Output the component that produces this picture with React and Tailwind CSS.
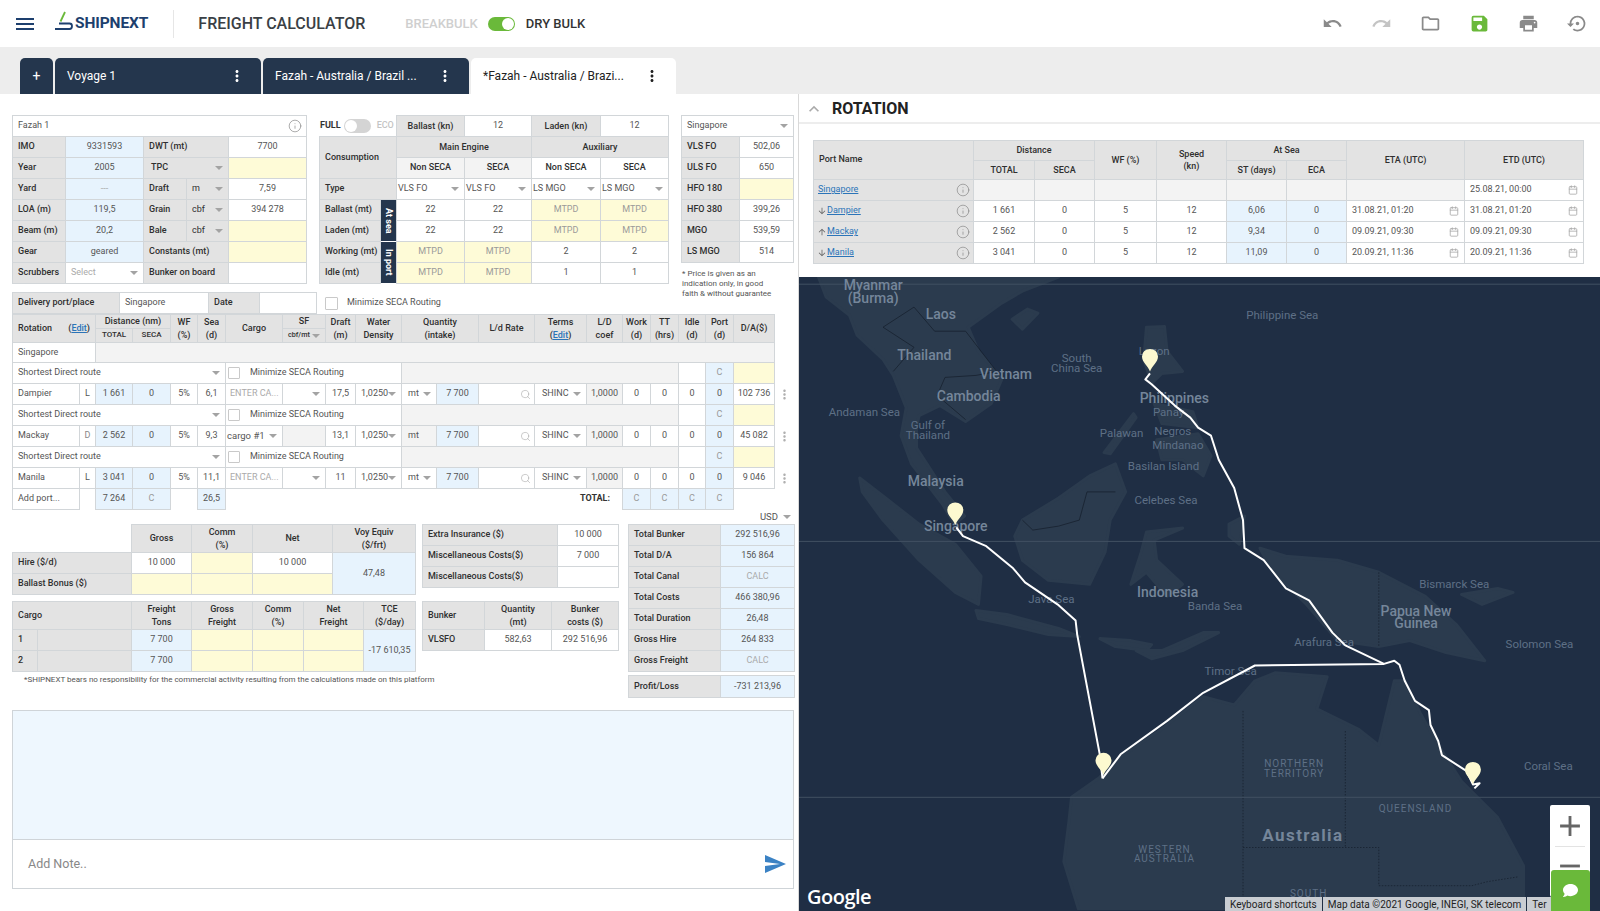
import React from 'react';
import clsx from 'clsx';
import { Calendar, Info, Search } from 'lucide-react';
import { FaComment } from 'react-icons/fa';
import {
    MdAdd, MdArrowDownward, MdArrowUpward, MdExpandLess, MdMenu, MdMoreVert, MdOutlineFolder, MdPrint, MdRedo,
    MdRemove, MdSave, MdSend, MdSettingsBackupRestore, MdUndo,
} from 'react-icons/md';

const tones = {
    label: 'bg-[#e3e3e3] text-[#2f2f2f] font-medium justify-start pl-[5px]',
    head: 'bg-[#e3e3e3] text-[#2f2f2f] font-medium justify-center text-center leading-[12.5px]',
    sub: 'bg-[#f3f3f3] text-[#2f2f2f] font-medium justify-center',
    white: 'bg-white text-[#555] justify-center',
    left: 'bg-white text-[#555] justify-start pl-[5px]',
    blue: 'bg-[#e7f3fd] text-[#555] justify-center',
    yellow: 'bg-[#fefbd7] text-[#9a9a9a] justify-center',
    gray: 'bg-[#f3f3f3] text-[#555] justify-center',
};

const Cell = ({ tone = 'white', className, children }) => (
    <div className={clsx('flex items-center ring-1 ring-[#d2d6d9] overflow-hidden whitespace-nowrap', tones[tone], className)}>
        {children}
    </div>
);

const Caret = () => <span className="ml-auto shrink-0 mr-[5px] border-x-[4px] border-t-[4px] border-x-transparent border-t-[#a3a3a3]" />;

const Select = ({ tone = 'white', className, children }) => (
    <Cell tone={tone} className={clsx('!justify-start pl-[3px]', className)}>
        <span>{children}</span>
        <Caret />
    </Cell>
);

const Check = ({ className }) => <span className={clsx('block w-[12px] h-[12px] border border-[#c9c9c9] rounded-[1px] bg-white', className)} />;

const Kebab = () => (
    <div className="flex items-center justify-center text-[#b0b0b0]">
        <MdMoreVert size={15} />
    </div>
);

const vesselRows = [
    ['IMO', '9331593', 'DWT (mt)', '7700'],
    ['Year', '2005', 'TPC', ''],
    ['Yard', '---', 'Draft', '7,59', 'm'],
    ['LOA (m)', '119,5', 'Grain', '394 278', 'cbf'],
    ['Beam (m)', '20,2', 'Bale', '', 'cbf'],
    ['Gear', 'geared', 'Constants (mt)', ''],
];

const VesselTable = () => (
    <div className="grid grid-cols-[52px_77px_42px_41px_77px] auto-rows-[20px] gap-px">
        <Cell tone="left" className="col-span-5 pr-[4px]">
            <span>Fazah 1</span>
            <Info size={14} strokeWidth={1.2} className="ml-auto text-[#888]" />
        </Cell>
        {vesselRows.map(([a, b, c, d, unit]) => (
            <React.Fragment key={a}>
                <Cell tone="label">{a}</Cell>
                <Cell tone="blue" className={b === '---' ? 'text-[#aaa]' : ''}>{b}</Cell>
                {unit ? (
                    <>
                        <Cell tone="label">{c}</Cell>
                        <Select tone="label" className="font-normal">{unit}</Select>
                    </>
                ) : c === 'TPC' ? (
                    <Select tone="label" className="col-span-2 pl-[7px]">{c}</Select>
                ) : (
                    <Cell tone="label" className="col-span-2">{c}</Cell>
                )}
                <Cell tone={d ? 'white' : 'yellow'}>{d}</Cell>
            </React.Fragment>
        ))}
        <Cell tone="label">Scrubbers</Cell>
        <Select className="!pl-[5px] text-[#aaa]">Select</Select>
        <Cell tone="label" className="col-span-2">Bunker on board</Cell>
        <Cell />
    </div>
);

const ConsumptionTable = () => (
    <div className="grid grid-cols-[60px_15px_67px_66px_68px_67px] auto-rows-[20px] gap-px">
        <div className="col-span-2 flex items-center">
            <span className="font-bold text-[#333]">FULL</span>
            <span className="ml-[3px] w-[27px] h-[14px] rounded-full bg-[#d4d4d4] flex items-center">
                <span className="ml-px w-[12px] h-[12px] rounded-full bg-white" />
            </span>
            <span className="ml-[6px] font-medium text-[#c4c4c4]">ECO</span>
        </div>
        <Cell tone="head">Ballast (kn)</Cell>
        <Cell>12</Cell>
        <Cell tone="head">Laden (kn)</Cell>
        <Cell>12</Cell>

        <Cell tone="label" className="col-span-2 row-span-2">Consumption</Cell>
        <Cell tone="head" className="col-span-2">Main Engine</Cell>
        <Cell tone="head" className="col-span-2">Auxiliary</Cell>
        <Cell tone="sub">Non SECA</Cell>
        <Cell tone="sub">SECA</Cell>
        <Cell tone="sub" className="bg-white">Non SECA</Cell>
        <Cell tone="sub" className="bg-white">SECA</Cell>

        <Cell tone="label" className="col-span-2">Type</Cell>
        <Select className="!pl-[1px]">VLS FO</Select>
        <Select className="!pl-[1px]">VLS FO</Select>
        <Select className="!pl-[1px]">LS MGO</Select>
        <Select className="!pl-[1px]">LS MGO</Select>

        <Cell tone="label">Ballast (mt)</Cell>
        <div className="row-span-2 flex items-center justify-center bg-[#24364d] text-white font-bold [writing-mode:vertical-rl]">At sea</div>
        <Cell>22</Cell>
        <Cell>22</Cell>
        <Cell tone="yellow">MTPD</Cell>
        <Cell tone="yellow">MTPD</Cell>

        <Cell tone="label">Laden (mt)</Cell>
        <Cell>22</Cell>
        <Cell>22</Cell>
        <Cell tone="yellow">MTPD</Cell>
        <Cell tone="yellow">MTPD</Cell>

        <Cell tone="label">Working (mt)</Cell>
        <div className="row-span-2 flex items-center justify-center bg-[#24364d] text-white font-bold [writing-mode:vertical-rl]">In port</div>
        <Cell tone="yellow">MTPD</Cell>
        <Cell tone="yellow">MTPD</Cell>
        <Cell>2</Cell>
        <Cell>2</Cell>

        <Cell tone="label">Idle (mt)</Cell>
        <Cell tone="yellow">MTPD</Cell>
        <Cell tone="yellow">MTPD</Cell>
        <Cell>1</Cell>
        <Cell>1</Cell>
    </div>
);

const PriceTable = () => (
    <div>
        <div className="grid grid-cols-[57px_53px] auto-rows-[20px] gap-px">
            <Select className="col-span-2 !pl-[5px]">Singapore</Select>
            {[['VLS FO', '502,06'], ['ULS FO', '650'], ['HFO 180', ''], ['HFO 380', '399,26'], ['MGO', '539,59'], ['LS MGO', '514']].map(([a, b]) => (
                <React.Fragment key={a}>
                    <Cell tone="label">{a}</Cell>
                    <Cell tone={b ? 'white' : 'yellow'}>{b}</Cell>
                </React.Fragment>
            ))}
        </div>
        <p className="mt-[7px] text-[8px] leading-[10px] text-[#555]">* Price is given as an<br />indication only, in good<br />faith &amp; without guarantee</p>
    </div>
);

const routeRow = (
    <>
        <Select tone="left" className="col-span-6 !pl-[5px]">Shortest Direct route</Select>
        <Cell tone="left" className="col-span-4 !pl-[2px]">
            <Check className="mr-[10px]" />
            <span>Minimize SECA Routing</span>
        </Cell>
        <Cell tone="gray" className="col-span-7" />
        <Cell />
        <Cell tone="blue" className="text-[#999]">C</Cell>
        <Cell tone="yellow" />
        <div />
    </>
);

const PortRow = ({ name, type, total, sea, cargo, draft, unitSelect, da }) => (
    <>
        <Cell tone="left">{name}</Cell>
        <Cell className={type === 'D' ? 'text-[#888]' : ''}>{type}</Cell>
        <Cell tone="blue">{total}</Cell>
        <Cell tone="blue">0</Cell>
        <Cell>5%</Cell>
        <Cell>{sea}</Cell>
        {cargo ? (
            <>
                <Select className="!pl-px text-[9.5px]">{cargo}</Select>
                <Cell tone="gray" />
            </>
        ) : (
            <>
                <Cell tone="left" className="text-[#aaa] !pl-[4px]">ENTER CA...</Cell>
                <Select />
            </>
        )}
        <Cell>{draft}</Cell>
        <Select className="!pl-[5px]">1,0250</Select>
        {unitSelect ? <Select className="!pl-[6px]">mt</Select> : <Cell tone="gray" className="!justify-start pl-[6px]">mt</Cell>}
        <Cell tone="blue">7 700</Cell>
        <Cell className="!justify-end pr-[3px]"><Search size={11} strokeWidth={1.3} className="text-[#aaa]" /></Cell>
        <Select className="!pl-[7px]">SHINC</Select>
        <Cell tone="gray">1,0000</Cell>
        <Cell>0</Cell>
        <Cell>0</Cell>
        <Cell>0</Cell>
        <Cell tone="blue">0</Cell>
        <Cell>{da}</Cell>
        <Kebab />
    </>
);

const RotationTable = () => (
    <div className="grid grid-cols-[66px_15px_36px_37px_26px_27px_56px_42px_29px_45px_34px_41px_55px_51px_35px_27px_27px_26px_27px_40px_19px] grid-rows-[13px_13px_19px_repeat(7,20px)] gap-px">
        <Cell tone="label" className="col-span-2 row-span-2 !pr-[2px] justify-between">
            <span>Rotation</span>
            <span className="ml-auto mr-[3px] font-medium">(<span className="text-[#2b74b8] underline">Edit</span>)</span>
        </Cell>
        <Cell tone="head" className="col-span-2">Distance (nm)</Cell>
        <Cell tone="head" className="row-span-2">WF<br />(%)</Cell>
        <Cell tone="head" className="row-span-2">Sea<br />(d)</Cell>
        <Cell tone="head" className="row-span-2">Cargo</Cell>
        <Cell tone="head">SF</Cell>
        <Cell tone="head" className="row-span-2">Draft<br />(m)</Cell>
        <Cell tone="head" className="row-span-2">Water<br />Density</Cell>
        <Cell tone="head" className="col-span-2 row-span-2">Quantity<br />(intake)</Cell>
        <Cell tone="head" className="row-span-2">L/d Rate</Cell>
        <Cell tone="head" className="row-span-2"><span>Terms<br />(<span className="text-[#2b74b8] underline">Edit</span>)</span></Cell>
        <Cell tone="head" className="row-span-2">L/D<br />coef</Cell>
        <Cell tone="head" className="row-span-2">Work<br />(d)</Cell>
        <Cell tone="head" className="row-span-2">TT<br />(hrs)</Cell>
        <Cell tone="head" className="row-span-2">Idle<br />(d)</Cell>
        <Cell tone="head" className="row-span-2">Port<br />(d)</Cell>
        <Cell tone="head" className="row-span-2">D/A($)</Cell>
        <div className="row-span-2" />
        <Cell tone="head" className="text-[8px]">TOTAL</Cell>
        <Cell tone="head" className="text-[8px]">SECA</Cell>
        <Cell tone="head" className="!justify-start pl-[5px] text-[7.2px]">cbf/mt<Caret /></Cell>

        <Cell tone="left" className="col-span-2">Singapore</Cell>
        <Cell tone="gray" className="col-span-18" />
        <div />

        {routeRow}
        <PortRow name="Dampier" type="L" total="1 661" sea="6,1" draft="17,5" unitSelect da="102 736" />
        {routeRow}
        <PortRow name="Mackay" type="D" total="2 562" sea="9,3" cargo="cargo #1" draft="13,1" da="45 082" />
        {routeRow}
        <PortRow name="Manila" type="L" total="3 041" sea="11,1" draft="11" unitSelect da="9 046" />

        <Cell tone="left">Add port...</Cell>
        <div />
        <Cell tone="blue">7 264</Cell>
        <Cell tone="blue" className="text-[#999]">C</Cell>
        <div />
        <Cell tone="blue">26,5</Cell>
        <div className="col-span-9 flex items-center justify-end pr-[12px] font-bold text-[#333]">TOTAL:</div>
        <Cell tone="blue" className="text-[#999]">C</Cell>
        <Cell tone="blue" className="text-[#999]">C</Cell>
        <Cell tone="blue" className="text-[#999]">C</Cell>
        <Cell tone="blue" className="text-[#999]">C</Cell>
    </div>
);

const HireTable = () => (
    <div className="grid grid-cols-[118px_59px_60px_79px_82px] grid-rows-[27px_20px_20px] gap-px">
        <div />
        <Cell tone="head">Gross</Cell>
        <Cell tone="head">Comm<br />(%)</Cell>
        <Cell tone="head">Net</Cell>
        <Cell tone="head">Voy Equiv<br />($/frt)</Cell>
        <Cell tone="label">Hire ($/d)</Cell>
        <Cell>10 000</Cell>
        <Cell tone="yellow" />
        <Cell>10 000</Cell>
        <Cell tone="blue" className="row-span-2">47,48</Cell>
        <Cell tone="label">Ballast Bonus ($)</Cell>
        <Cell tone="yellow" />
        <Cell tone="yellow" />
        <Cell tone="yellow" />
    </div>
);

const CargoTable = () => (
    <div className="mt-[8px] grid grid-cols-[24px_93px_59px_60px_50px_59px_51px] grid-rows-[27px_20px_20px] gap-px">
        <Cell tone="label" className="col-span-2">Cargo</Cell>
        <Cell tone="head">Freight<br />Tons</Cell>
        <Cell tone="head">Gross<br />Freight</Cell>
        <Cell tone="head">Comm<br />(%)</Cell>
        <Cell tone="head">Net<br />Freight</Cell>
        <Cell tone="head">TCE<br />($/day)</Cell>
        <Cell tone="label">1</Cell>
        <Cell tone="label" />
        <Cell tone="blue">7 700</Cell>
        <Cell tone="yellow" />
        <Cell tone="yellow" />
        <Cell tone="yellow" />
        <Cell tone="blue" className="row-span-2">-17 610,35</Cell>
        <Cell tone="label">2</Cell>
        <Cell tone="label" />
        <Cell tone="blue">7 700</Cell>
        <Cell tone="yellow" />
        <Cell tone="yellow" />
        <Cell tone="yellow" />
    </div>
);

const CostsTable = () => (
    <div className="grid grid-cols-[134px_60px] auto-rows-[20px] gap-px">
        <Cell tone="label">Extra Insurance ($)</Cell>
        <Cell>10 000</Cell>
        <Cell tone="label">Miscellaneous Costs($)</Cell>
        <Cell>7 000</Cell>
        <Cell tone="label">Miscellaneous Costs($)</Cell>
        <Cell />
    </div>
);

const BunkerTable = () => (
    <div className="mt-[15px] grid grid-cols-[61px_66px_66px] grid-rows-[27px_20px] gap-px">
        <Cell tone="label">Bunker</Cell>
        <Cell tone="head">Quantity<br />(mt)</Cell>
        <Cell tone="head">Bunker<br />costs ($)</Cell>
        <Cell tone="label" className="font-bold">VLSFO</Cell>
        <Cell>582,63</Cell>
        <Cell>292 516,96</Cell>
    </div>
);

const totals = [
    ['Total Bunker', '292 516,96'],
    ['Total D/A', '156 864'],
    ['Total Canal', 'CALC'],
    ['Total Costs', '466 380,96'],
    ['Total Duration', '26,48'],
    ['Gross Hire', '264 833'],
    ['Gross Freight', 'CALC'],
];

const TotalsTable = () => (
    <div>
        <div className="grid grid-cols-[91px_73px] auto-rows-[20px] gap-px">
            {totals.map(([a, b]) => (
                <React.Fragment key={a}>
                    <Cell tone="label">{a}</Cell>
                    <Cell tone="blue" className={b === 'CALC' ? 'text-[#aaa]' : ''}>{b}</Cell>
                </React.Fragment>
            ))}
        </div>
        <div className="mt-[5px] grid grid-cols-[91px_73px] auto-rows-[21px] gap-px">
            <Cell tone="label">Profit/Loss</Cell>
            <Cell tone="blue">-731 213,96</Cell>
        </div>
    </div>
);

const Calculator = () => (
    <div className="w-[799px] shrink-0 border-r border-[#d9d9d9] pt-[22px] flex flex-col text-[9px] text-[#555]">
        <div className="pl-[13px] flex items-start gap-[14px]">
            <VesselTable />
            <ConsumptionTable />
            <PriceTable />
        </div>

        <div className="pl-[13px] -mt-[6px] flex items-center">
            <div className="grid grid-cols-[106px_88px_50px_56px] auto-rows-[20px] gap-px">
                <Cell tone="label">Delivery port/place</Cell>
                <Cell tone="left">Singapore</Cell>
                <Cell tone="label">Date</Cell>
                <Cell />
            </div>
            <Check className="ml-[9px] w-[13px] h-[13px]" />
            <span className="ml-[9px]">Minimize SECA Routing</span>
        </div>

        <div className="pl-[13px] mt-[2px]">
            <RotationTable />
        </div>

        <div className="h-[16px] pr-[7px] flex items-center justify-end gap-[5px] text-[9.5px]">
            USD <span className="border-x-[4px] border-t-[4px] border-x-transparent border-t-[#a3a3a3]" />
        </div>

        <div className="pl-[13px] flex items-start">
            <div className="w-[410px] shrink-0">
                <HireTable />
                <CargoTable />
                <p className="mt-[3px] pl-[11px] text-[8px] leading-[12px] whitespace-nowrap">*SHIPNEXT bears no responsibility for the commercial activity resulting from the calculations made on this platform</p>
            </div>
            <div className="w-[206px] shrink-0">
                <CostsTable />
                <BunkerTable />
            </div>
            <TotalsTable />
        </div>

        <div className="mt-[13px] ml-[12px] mr-[4px] border border-[#cfd4d8]">
            <div className="h-[129px] bg-[#eef7fe] border-b border-[#cfd4d8]" />
            <div className="h-[48px] bg-white flex items-center pl-[15px] pr-[6px] text-[12.5px] text-[#888]">
                <span>Add Note..</span>
                <MdSend size={24} className="ml-auto text-[#3b82c4]" />
            </div>
        </div>
    </div>
);

const portRows = [
    { name: 'Dampier', dir: 'down', total: '1 661', st: '6,06', eta: '31.08.21, 01:20', etd: '31.08.21, 01:20' },
    { name: 'Mackay', dir: 'up', total: '2 562', st: '9,34', eta: '09.09.21, 09:30', etd: '09.09.21, 09:30' },
    { name: 'Manila', dir: 'down', total: '3 041', st: '11,09', eta: '20.09.21, 11:36', etd: '20.09.21, 11:36' },
];

const DateCell = ({ value }) => (
    <Cell tone="left" className="pr-[5px]">
        <span>{value}</span>
        <Calendar size={10} className="ml-auto text-[#aaa]" />
    </Cell>
);

const PortNameCell = ({ name, dir }) => (
    <Cell tone="label" className="font-normal pr-[3px] !pl-[3px]">
        {dir === 'down' && <MdArrowDownward size={10} className="text-[#666]" />}
        {dir === 'up' && <MdArrowUpward size={10} className="text-[#666]" />}
        <span className={clsx('text-[#2b74b8] underline', !dir && 'ml-px')}>{name}</span>
        <Info size={14} strokeWidth={1} className="ml-auto text-[#777]" />
    </Cell>
);

const RouteTable = () => (
    <div className="ml-[15px] mt-[17px] grid grid-cols-[159px_60px_59px_61px_69px_59px_59px_117px_118px] grid-rows-[19px_18px_repeat(4,20px)] gap-px text-[9px] text-[#555]">
        <Cell tone="label" className="row-span-2">Port Name</Cell>
        <Cell tone="head" className="col-span-2">Distance</Cell>
        <Cell tone="head" className="row-span-2">WF (%)</Cell>
        <Cell tone="head" className="row-span-2">Speed<br />(kn)</Cell>
        <Cell tone="head" className="col-span-2">At Sea</Cell>
        <Cell tone="head" className="row-span-2">ETA (UTC)</Cell>
        <Cell tone="head" className="row-span-2">ETD (UTC)</Cell>
        <Cell tone="head">TOTAL</Cell>
        <Cell tone="head">SECA</Cell>
        <Cell tone="head">ST (days)</Cell>
        <Cell tone="head">ECA</Cell>

        <PortNameCell name="Singapore" />
        <Cell tone="gray" />
        <Cell tone="gray" />
        <Cell tone="gray" />
        <Cell tone="gray" />
        <Cell tone="gray" />
        <Cell tone="gray" />
        <Cell tone="gray" />
        <DateCell value="25.08.21, 00:00" />

        {portRows.map((row) => (
            <React.Fragment key={row.name}>
                <PortNameCell name={row.name} dir={row.dir} />
                <Cell>{row.total}</Cell>
                <Cell>0</Cell>
                <Cell>5</Cell>
                <Cell>12</Cell>
                <Cell tone="blue">{row.st}</Cell>
                <Cell tone="blue">0</Cell>
                <DateCell value={row.eta} />
                <DateCell value={row.etd} />
            </React.Fragment>
        ))}
    </div>
);

// coordinates below were read off a stretched crop of the map, so scale them here
const mx = (x) => +(x / 1.936 - 9).toFixed(1);
const my = (y) => +(y / 2.489 + 2).toFixed(1);
const toPoints = (pts) => pts.map(([x, y]) => `${mx(x)},${my(y)}`).join(' ');

const land = [
    [[55, -5], [70, 45], [115, 90], [130, 140], [180, 200], [200, 240], [225, 320], [215, 390], [235, 460], [265, 510], [295, 560], [318, 610], [338, 590], [300, 530], [270, 470], [245, 420], [245, 370], [250, 340], [290, 315], [340, 355], [390, 310], [410, 250], [365, 180], [345, 120], [410, 60], [450, 30], [520, -5]],
    [[135, 495], [180, 540], [250, 610], [320, 660], [370, 740], [365, 810], [320, 780], [250, 700], [180, 600], [140, 530]],
    [[360, 825], [420, 835], [520, 870], [560, 890], [500, 885], [420, 860], [365, 845]],
    [[600, 895], [660, 900], [700, 910], [690, 925], [630, 915]],
    [[670, 925], [720, 925], [800, 880], [830, 880], [760, 925], [700, 945]],
    [[435, 640], [450, 600], [520, 545], [580, 490], [630, 460], [650, 530], [620, 600], [610, 680], [580, 760], [500, 750], [450, 700]],
    [[660, 760], [680, 680], [690, 630], [760, 620], [705, 650], [710, 700], [760, 760], [730, 790], [690, 730]],
    [[690, 120], [725, 118], [730, 180], [760, 230], [720, 235], [700, 260], [685, 200]],
    [[705, 310], [780, 330], [790, 370], [720, 360]],
    [[710, 400], [790, 385], [815, 440], [800, 490], [760, 450], [720, 450]],
    [[608, 432], [665, 335], [670, 345], [620, 435]],
    [[850, 610], [880, 590], [870, 660], [850, 640]],
    [[910, 670], [960, 690], [1060, 700], [1140, 730], [1230, 790], [1290, 860], [1345, 950], [1270, 930], [1200, 900], [1140, 915], [1060, 900], [1000, 810], [930, 720]],
    [[1300, 785], [1370, 770], [1400, 780], [1340, 810]],
    [[430, 100], [460, 75], [480, 85], [450, 125]],
    [[545, 1290], [600, 1240], [640, 1190], [720, 1120], [800, 1040], [860, 1060], [900, 1000], [940, 980], [1040, 990], [1020, 1070], [1100, 1120], [1140, 1160], [1170, 1000], [1190, 1000], [1220, 1080], [1250, 1150], [1300, 1250], [1370, 1340], [1420, 1460], [1420, 1575], [560, 1575], [530, 1450], [540, 1350]],
];

const borders = [
    [[180, 120], [240, 70], [280, 130], [340, 130], [400, 230], [360, 240], [300, 245], [285, 290], [340, 350]],
    [[200, 230], [240, 170], [180, 120]],
    [[450, 600], [470, 625], [520, 615], [560, 600], [575, 530], [630, 530]],
];

const dashed = [
    [[877, 1075], [877, 1575]],
    [[1075, 1125], [1075, 1415]],
    [[877, 1415], [1140, 1415], [1140, 1510], [1320, 1510], [1350, 1500], [1410, 1488]],
    [[1140, 730], [1140, 915]],
];

const routes = [
    [[322, 618], [335, 640], [380, 665], [432, 720], [455, 755], [520, 812], [553, 850], [556, 885], [600, 1185], [605, 1243]],
    [[605, 1243], [640, 1183], [730, 1100], [800, 1030], [900, 962], [1150, 958], [1170, 950], [1180, 960], [1190, 1000], [1210, 1050], [1237, 1073], [1240, 1110], [1255, 1150], [1262, 1185], [1310, 1225], [1322, 1258], [1335, 1255], [1325, 1268]],
    [[1150, 958], [1075, 912], [1050, 880], [1005, 800], [960, 770], [917, 700], [880, 670], [877, 600], [860, 520], [830, 450], [815, 390], [790, 370], [775, 345], [745, 315], [700, 262], [688, 250], [697, 235]],
];

const pins = [[320, 612], [697, 230], [607, 1235], [1322, 1258]];

const countries = [
    ['Myanmar', 161, 15], ['(Burma)', 161, 48], ['Laos', 292, 87], ['Thailand', 260, 188], ['Vietnam', 418, 237],
    ['Cambodia', 346, 290], ['Malaysia', 282, 502], ['Singapore', 321, 615], ['Philippines', 744, 296],
    ['Indonesia', 731, 778], ['Papua New', 1212, 825], ['Guinea', 1212, 857],
];

const seas = [
    ['Philippine Sea', 953, 90], ['South', 555, 196], ['China Sea', 555, 221], ['Andaman Sea', 144, 332], ['Gulf of', 267, 363],
    ['Thailand', 267, 388], ['Palawan', 642, 384], ['Panay', 733, 330], ['Negros', 741, 377], ['Mindanao', 751, 412],
    ['Luzon', 705, 178], ['Basilan Island', 723, 466], ['Celebes Sea', 728, 551], ['Java Sea', 506, 797], ['Banda Sea', 823, 815],
    ['Arafura Sea', 1034, 903], ['Timor Sea', 853, 976], ['Bismarck Sea', 1286, 759], ['Solomon Sea', 1451, 909], ['Coral Sea', 1468, 1213],
];

const states = [
    ['NORTHERN', 976, 1205], ['TERRITORY', 976, 1230], ['QUEENSLAND', 1211, 1318], ['WESTERN', 725, 1419], ['AUSTRALIA', 725, 1443], ['SOUTH', 1004, 1530],
];

const MapDrawing = () => (
    <svg width="801" height="633" className="block" fontFamily="Roboto, sans-serif" textAnchor="middle">
        {land.map((pts, i) => <polygon key={i} points={toPoints(pts)} fill="#2b3b4e" stroke="#2b3b4e" strokeWidth="3" strokeLinejoin="round" />)}
        {borders.map((pts, i) => <polyline key={i} points={toPoints(pts)} fill="none" stroke="#17212f" strokeWidth="0.8" />)}
        {dashed.map((pts, i) => <polyline key={i} points={toPoints(pts)} fill="none" stroke="#17212f" strokeWidth="0.8" strokeDasharray="1.5 1.5" />)}
        <line x1="0" y1={my(13)} x2="801" y2={my(13)} stroke="#415062" />
        <line x1="0" y1={my(653)} x2="801" y2={my(653)} stroke="#415062" />
        <line x1="0" y1={my(1290)} x2="801" y2={my(1290)} stroke="#415062" />
        {seas.map(([t, x, y]) => <text key={t + y} x={mx(x)} y={my(y) + 4} fontSize="11.5" fill="#5e7086">{t}</text>)}
        {states.map(([t, x, y]) => <text key={t} x={mx(x)} y={my(y) + 3.5} fontSize="10" letterSpacing="1" fill="#5e7086">{t}</text>)}
        {countries.map(([t, x, y]) => <text key={t} x={mx(x)} y={my(y) + 5} fontSize="14" fontWeight="500" fill="#75869a">{t}</text>)}
        <text x={mx(993)} y={my(1385) + 6} fontSize="17" fontWeight="700" letterSpacing="1.4" fill="#75869a">Australia</text>
        {routes.map((pts, i) => <polyline key={i} points={toPoints(pts)} fill="none" stroke="#fff" strokeWidth="2" strokeLinejoin="round" />)}
        {pins.map(([x, y]) => (
            <path key={x} transform={`translate(${mx(x)} ${my(y)})`} fill="#fdf9d0" d="M0 0C-2-6-8-9-8-15A8 7.500 0 1 1 8-15C8-9 2-6 0 0Z" />
        ))}
    </svg>
);

const MapPanel = () => (
    <div className="relative flex-1 min-h-0 mt-[14px] bg-[#1f2e44] overflow-hidden">
        <MapDrawing />
        <span className="absolute left-[8px] -bottom-px font-[family-name:Open_Sans,sans-serif] text-[20px] font-semibold tracking-[-0.5px] text-white">Google</span>
        <div className="absolute right-[10px] bottom-[14px] w-[40px] h-[92px] bg-white rounded-[2px] flex flex-col items-center text-[#666] pt-[4px]">
            <MdAdd size={34} />
            <span className="block w-[30px] h-px bg-[#e3e3e3] mt-[3px]" />
            <MdRemove size={34} className="mt-[2px]" />
        </div>
        <div className="absolute right-[39px] left-[426px] bottom-0 h-[14px] flex items-stretch gap-px bg-[#1f2e44] text-[10px] text-[#222] whitespace-nowrap">
            <span className="pl-[5px] pr-[5px] bg-[#c9cdd2]">Keyboard shortcuts</span>
            <span className="pl-[5px] pr-[5px] bg-[#c9cdd2]">Map data ©2021 Google, INEGI, SK telecom</span>
            <span className="pl-[5px] flex-1 overflow-hidden bg-[#c9cdd2]">Ter</span>
        </div>
        <div className="absolute right-[10px] bottom-0 w-[39px] h-[41px] rounded-t-[3px] bg-[#6ab93a] flex items-center justify-center text-white">
            <FaComment size={15} />
        </div>
    </div>
);

const Tab = ({ children, active, className }) => (
    <div className={clsx('h-full flex items-center rounded-t-[5px] text-[12px] pl-[12px] pr-[15px]', active ? 'bg-white text-[#222]' : 'bg-[#24364d] text-white', className)}>
        <span className="whitespace-nowrap">{children}</span>
        <MdMoreVert size={18} className="ml-auto" />
    </div>
);

const App = () => (
    <div className="w-[1600px] h-[911px] overflow-hidden bg-white flex flex-col font-[family-name:Roboto,sans-serif]">
        <header className="h-[47px] shrink-0 flex items-center">
            <MdMenu size={24} className="ml-[13px] text-[#1d3f6e]" />
            <svg width="22" height="22" viewBox="0 0 22 22" className="ml-[17px] -mt-[3px]">
                <path d="M11 1 L6.500 10.500" stroke="#6ab93a" strokeWidth="1.800" fill="none" />
                <path d="M5 12.500 H15.500 Q18 12.500 18 15 Q18 18 15.500 18 H1" stroke="#1d3f6e" strokeWidth="1.800" fill="none" />
            </svg>
            <span className="-ml-[1px] text-[15.5px] font-bold text-[#1d3f6e] tracking-[-0.1px]">SHIPNEXT</span>
            <span className="ml-[25px] w-px h-[28px] bg-[#e6e6e6]" />
            <span className="ml-[24px] text-[16px] font-medium text-[#3a3f45]">FREIGHT CALCULATOR</span>
            <span className="ml-[40px] text-[13px] font-medium text-[#cfcfcf]">BREAKBULK</span>
            <span className="ml-[10px] w-[27px] h-[14px] rounded-full bg-[#6ab93a] flex items-center justify-end pr-px">
                <span className="w-[12px] h-[12px] rounded-full bg-white" />
            </span>
            <span className="ml-[11px] text-[13px] font-medium text-[#333]">DRY BULK</span>
            <div className="ml-auto mr-[12px] flex items-center gap-[28px] text-[#8a8a8a]">
                <MdUndo size={21} />
                <MdRedo size={21} className="text-[#c4c4c4]" />
                <MdOutlineFolder size={21} />
                <MdSave size={21} className="text-[#6ab93a]" />
                <MdPrint size={21} />
                <MdSettingsBackupRestore size={21} />
            </div>
        </header>

        <div className="h-[47px] shrink-0 bg-[#ededed] pt-[11px] pl-[20px] flex items-stretch gap-[2px]">
            <div className="w-[33px] rounded-t-[5px] bg-[#24364d] text-white text-[14px] flex items-center justify-center">+</div>
            <Tab className="w-[206px]">Voyage 1</Tab>
            <Tab className="w-[206px]">Fazah - Australia / Brazil ...</Tab>
            <Tab active className="w-[205px]">*Fazah - Australia / Brazi...</Tab>
        </div>

        <div className="flex-1 min-h-0 flex">
            <Calculator />
            <div className="flex-1 min-w-0 flex flex-col">
                <div className="h-[30px] shrink-0 flex items-center border-b-2 border-[#ededed] pl-[5px] pt-[2px]">
                    <MdExpandLess size={20} className="text-[#aaa]" />
                    <span className="ml-[8px] text-[16px] font-bold text-[#222]">ROTATION</span>
                </div>
                <RouteTable />
                <MapPanel />
            </div>
        </div>
    </div>
);

export default App;
